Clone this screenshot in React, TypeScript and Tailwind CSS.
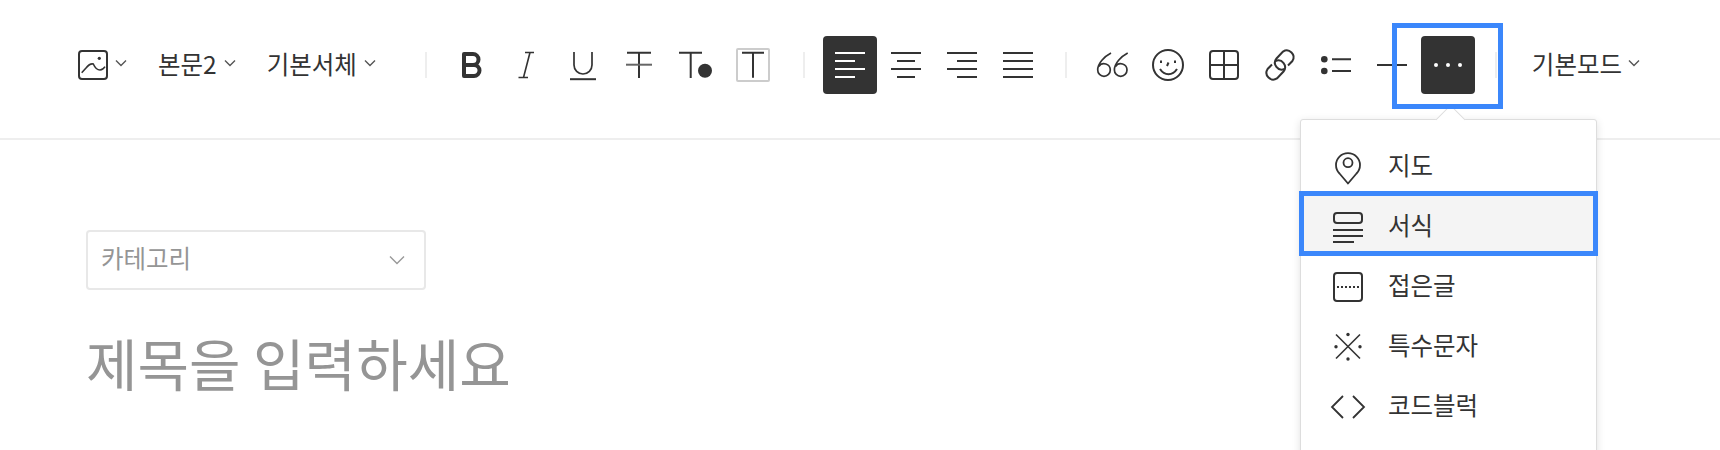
import type { ReactNode } from "react";

const font = { fontFamily: '"Noto Sans CJK KR", "Noto Sans", sans-serif' };

function Chevron({ className = "" }: { className?: string }) {
    return (
        <svg width="12" height="8" viewBox="0 0 12 8" fill="none" stroke="#555" strokeWidth="1.4" className={className}>
            <path d="M1 1.5l5 5 5-5" />
        </svg>
    );
}

function Icon({ children, color = "#333", sw = 2 }: { children: ReactNode; color?: string; sw?: number }) {
    return (
        <svg width="30" height="30" viewBox="0 0 30 30" fill="none" stroke={color} strokeWidth={sw} className="overflow-visible shrink-0">
            {children}
        </svg>
    );
}

function ToolBtn({ active, children }: { active?: boolean; children: ReactNode }) {
    return (
        <div className={`flex h-[58px] w-[54px] shrink-0 items-center justify-center rounded-[4px] mr-[2px] last:mr-0 ${active ? "bg-[#333]" : ""}`}>
            {children}
        </div>
    );
}

function Sep({ className }: { className: string }) {
    return <div className={`h-[26px] w-[2px] shrink-0 bg-[#eee] ${className}`} />;
}

function Lines({ rows, color = "#333" }: { rows: [number, number][]; color?: string }) {
    return (
        <Icon color={color}>
            {rows.map(([a, b], i) => (
                <path key={i} d={`M${a} ${3 + i * 8}H${b}`} />
            ))}
        </Icon>
    );
}

function MenuRow({ icon, label, selected }: { icon: ReactNode; label: string; selected?: boolean }) {
    return (
        <div className="relative flex h-[60px] items-center pl-[32px]">
            {selected && (
                <div className="absolute -left-[2px] -right-[2px] -top-[4px] h-[65px] border-[5px] border-[#3b87fb] bg-[#f4f4f4]" />
            )}
            <div className="relative flex items-center gap-[25px]">
                {icon}
                <span className="text-[24.5px] leading-[30px] text-[#333]">{label}</span>
            </div>
        </div>
    );
}

export default function App() {
    return (
        <div className="relative h-[450px] w-[1720px] overflow-hidden bg-white" style={font}>
            {/* toolbar */}
            <div className="flex h-[140px] items-start border-b-2 border-[#eee] pl-[78px] pt-[36px]">
                <div className="flex h-[58px] items-center">
                    <Icon>
                        <rect x="1" y="1" width="28" height="28" rx="3" />
                        <path d="M3.700 22.700L8 18Q12 13 15.300 14Q18 20 22 20Q25 20 27 16.700" strokeWidth="1.6" />
                        <circle cx="21.300" cy="8.300" r="1.600" fill="#333" stroke="none" />
                    </Icon>
                    <Chevron className="ml-[7px] -mt-[4px]" />
                    <span className="-mt-[2px] ml-[31px] text-[24.5px] text-[#333]">본문2</span>
                    <Chevron className="ml-[7px] -mt-[4px]" />
                    <span className="-mt-[2px] ml-[31px] text-[24.5px] text-[#333]">기본서체</span>
                    <Chevron className="ml-[7px] -mt-[4px]" />
                    <Sep className="ml-[49px] mr-[18px]" />
                    <ToolBtn>
                        <Icon sw={4}>
                            <path d="M7 4H16a5 5 0 0 1 0 11H7ZM16 15h1a5.5 5.5 0 0 1 0 11H7V15" strokeLinejoin="round" />
                        </Icon>
                    </ToolBtn>
                    <ToolBtn>
                        <Icon sw={1.6}>
                            <path d="M12 2.5h9M5.5 27.5H15M17 2.5L10.5 27.5" />
                        </Icon>
                    </ToolBtn>
                    <ToolBtn>
                        <Icon sw={1.7}>
                            <path d="M5 2v13a9 9 0 0 0 18 0V2" />
                            <path d="M1 29.2H27" strokeWidth="2" />
                        </Icon>
                    </ToolBtn>
                    <ToolBtn>
                        <Icon>
                            <path d="M2 2.7H26M14 2.7V28" />
                            <path d="M1 14.7H27" stroke="#666" />
                        </Icon>
                    </ToolBtn>
                    <ToolBtn>
                        <Icon>
                            <path d="M-2 2.7H21M9.7 2.7V28" />
                            <circle cx="24" cy="20.7" r="7" fill="#333" stroke="none" />
                        </Icon>
                    </ToolBtn>
                    <ToolBtn>
                        <Icon>
                            <rect x="0" y="-1" width="32" height="32" rx="1" stroke="#ccc" />
                            <path d="M5 2.7H27M16 2.7V27.7" />
                        </Icon>
                    </ToolBtn>
                    <Sep className="ml-[22px] mr-[18px]" />
                    <ToolBtn active>
                        <Lines color="#fff" rows={[[0, 30], [0, 20], [0, 30], [0, 20]]} />
                    </ToolBtn>
                    <ToolBtn>
                        <Lines rows={[[0, 30], [6, 24], [0, 30], [6, 24]]} />
                    </ToolBtn>
                    <ToolBtn>
                        <Lines rows={[[0, 30], [10, 30], [0, 30], [10, 30]]} />
                    </ToolBtn>
                    <ToolBtn>
                        <Lines rows={[[0, 30], [0, 30], [0, 30], [0, 30]]} />
                    </ToolBtn>
                    <Sep className="ml-[18px] mr-[18px]" />
                    <ToolBtn>
                        <Icon sw={1.7}>
                            <path d="M14 3C7.500 6.500 .7 13 .7 20a6.300 6.300 0 1 0 12.600 0 6.300 6.300 0 0 0-11.500-3.500" />
                            <path d="M30.700 3C24.200 6.500 17.400 13 17.400 20a6.300 6.300 0 1 0 12.600 0 6.300 6.300 0 0 0-11.500-3.500" />
                        </Icon>
                    </ToolBtn>
                    <ToolBtn>
                        <Icon>
                            <circle cx="15" cy="15" r="15" />
                            <path d="M7 19c4.500 7 12.500 7 17 0" />
                            <path d="M8 10.500v2.500M22 10.500v2.500M15.500 12.500l-1.500 3.500" />
                        </Icon>
                    </ToolBtn>
                    <ToolBtn>
                        <Icon>
                            <rect x="1" y="1" width="28" height="28" rx="3" />
                            <path d="M15 1V29M1 15H29" />
                        </Icon>
                    </ToolBtn>
                    <ToolBtn>
                        <Icon>
                            <path d="M23 15.500L27.400 11A6.800 6.800 0 0 0 18 1.600L11.500 8.500A6.800 6.800 0 0 0 19.500 19" />
                            <path d="M7 14.500L2.600 19A6.800 6.800 0 0 0 12 28.400L18.500 21.500A6.800 6.800 0 0 0 10.500 11" />
                        </Icon>
                    </ToolBtn>
                    <ToolBtn>
                        <Icon>
                            <circle cx="3.300" cy="9.300" r="3.300" fill="#333" stroke="none" />
                            <circle cx="3.300" cy="21" r="3.300" fill="#333" stroke="none" />
                            <path d="M11 9.300H30M11 21H30" />
                        </Icon>
                    </ToolBtn>
                    <ToolBtn>
                        <Icon>
                            <path d="M0 15H30" />
                        </Icon>
                    </ToolBtn>
                    <ToolBtn active>
                        <Icon color="#fff">
                            <circle cx="3" cy="15" r="2" fill="#fff" stroke="none" />
                            <circle cx="15" cy="15" r="2" fill="#fff" stroke="none" />
                            <circle cx="27" cy="15" r="2" fill="#fff" stroke="none" />
                        </Icon>
                    </ToolBtn>
                    <Sep className="ml-[18px]" />
                    <span className="-mt-[2px] ml-[35px] text-[24.5px] text-[#333]">기본모드</span>
                    <Chevron className="ml-[6px] -mt-[4px]" />
                </div>
            </div>

            {/* editor body */}
            <div className="pl-[86px] pt-[90px]">
                <div className="flex h-[60px] w-[340px] items-center justify-between rounded-[4px] border-2 border-[#e8e8e8] pl-[13px] pr-[19px]">
                    <span className="-mt-[4px] text-[24.5px] text-[#959595]">카테고리</span>
                    <svg width="16" height="10" viewBox="0 0 16 10" fill="none" stroke="#999" strokeWidth="1.4">
                        <path d="M1 1.500l7 7 7-7" />
                    </svg>
                </div>
                <div className="mt-[32px] text-[56px] leading-[80px] text-[#959595]">제목을 입력하세요</div>
            </div>

            {/* more menu */}
            <div className="absolute left-[1300px] top-[119px] h-[400px] w-[297px] rounded-[3px] border border-[#ddd] bg-white pt-[15px] shadow-[0_2px_8px_rgba(0,0,0,0.12)]">
                <div className="absolute -top-[11px] left-[139px] h-[21px] w-[21px] rotate-45 border-l border-t border-[#ddd] bg-white" />
                <MenuRow
                    label="지도"
                    icon={
                        <Icon sw={1.8}>
                            <path d="M15 33.500L6.500 23.500A12 12 0 1 1 23.500 23.500Z" strokeLinejoin="round" />
                            <circle cx="15" cy="12.700" r="4.500" />
                        </Icon>
                    }
                />
                <MenuRow
                    selected
                    label="서식"
                    icon={
                        <Icon>
                            <rect x="1" y="3" width="28" height="10" rx="3" />
                            <path d="M0 20H30M0 26H30M0 32H21" />
                        </Icon>
                    }
                />
                <MenuRow
                    label="접은글"
                    icon={
                        <Icon>
                            <rect x="1" y="3" width="28" height="28" rx="3" />
                            <path d="M4 17H26" strokeDasharray="2 2" />
                        </Icon>
                    }
                />
                <MenuRow
                    label="특수문자"
                    icon={
                        <Icon sw={1.6}>
                            <path d="M3 4.500L27 28.500M27 4.500L3 28.500" />
                            <circle cx="15" cy="4.500" r="1.700" fill="#333" stroke="none" />
                            <circle cx="15" cy="29" r="1.700" fill="#333" stroke="none" />
                            <circle cx="3" cy="16.700" r="1.700" fill="#333" stroke="none" />
                            <circle cx="27" cy="16.700" r="1.700" fill="#333" stroke="none" />
                        </Icon>
                    }
                />
                <MenuRow
                    label="코드블럭"
                    icon={
                        <Icon sw={1.8}>
                            <path d="M10 6L-1 17L10 28M20 6L31 17L20 28" />
                        </Icon>
                    }
                />
            </div>

            {/* highlight round the more button */}
            <div className="absolute left-[1392px] top-[23px] h-[86px] w-[111px] border-[5px] border-[#3b87fb]" />
        </div>
    );
}
